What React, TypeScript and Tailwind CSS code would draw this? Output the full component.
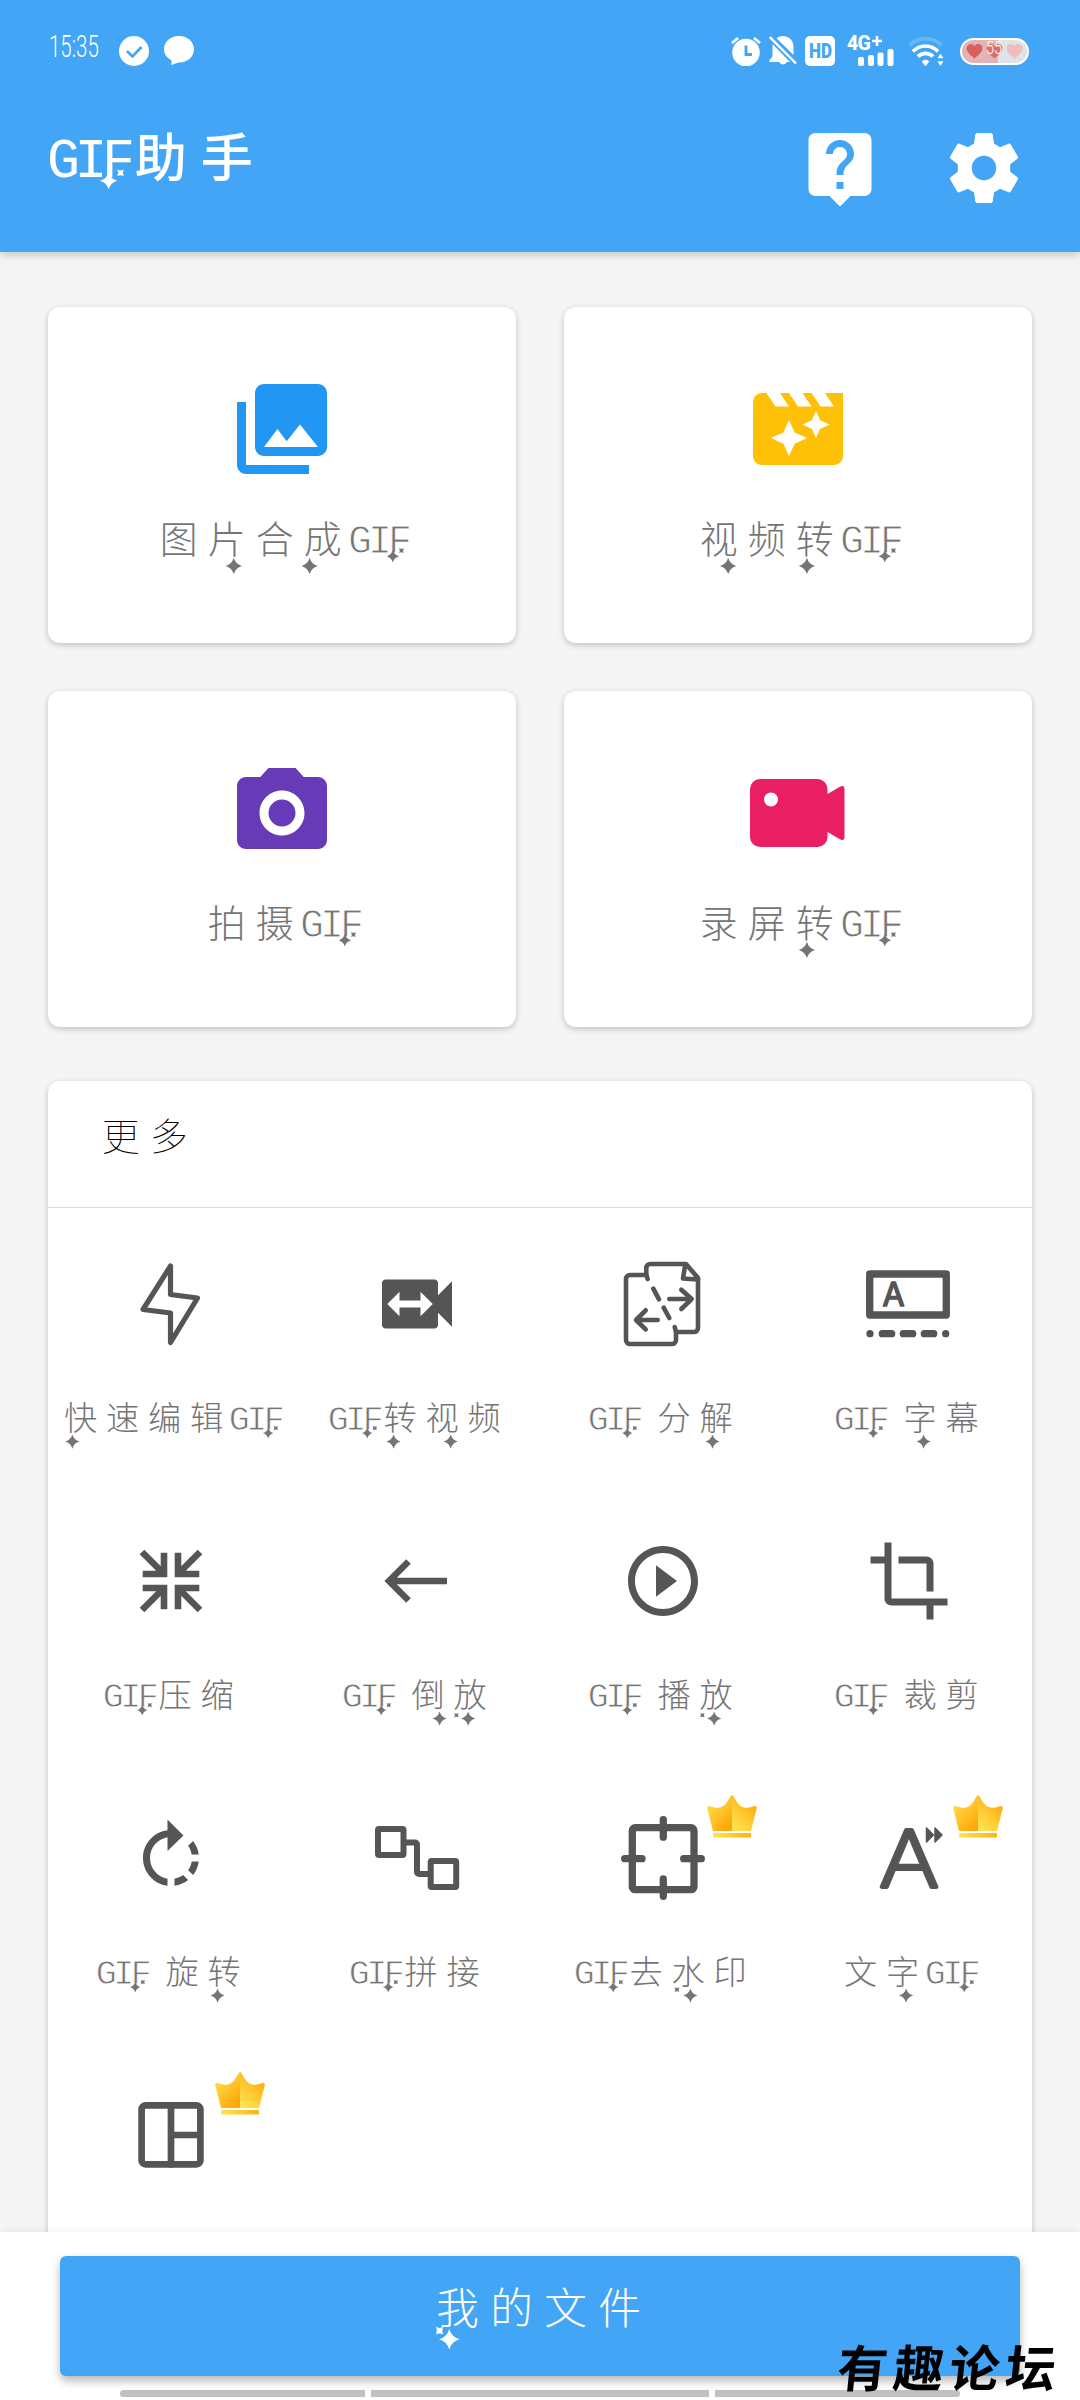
import type { ReactNode } from "react";
import clsx from "clsx";

type Star = { x: number; y: number; r: number; diag?: boolean };

// Pendant stars that hang from some of the characters. Units: one character cell.
const STARS: Record<string, Star[]> = {
  F: [
    { x: 0.1, y: 0.36, r: 0.13 },
    { x: 0.28, y: 0.24, r: 0.07, diag: true },
  ],
  片: [{ x: 0.62, y: 0.56, r: 0.17 }],
  成: [{ x: 0.2, y: 0.56, r: 0.17 }],
  视: [{ x: 0.67, y: 0.56, r: 0.17 }],
  转: [{ x: 0.31, y: 0.56, r: 0.17 }],
  快: [{ x: 0.27, y: 0.56, r: 0.17 }],
  解: [{ x: 0.38, y: 0.56, r: 0.17 }],
  字: [{ x: 0.55, y: 0.56, r: 0.17 }],
  倒: [{ x: 0.74, y: 0.56, r: 0.17 }],
  放: [
    { x: 0.42, y: 0.56, r: 0.17 },
    { x: 0.14, y: 0.48, r: 0.07, diag: true },
  ],
  水: [
    { x: 0.52, y: 0.56, r: 0.17 },
    { x: 0.2, y: 0.42, r: 0.08, diag: true },
  ],
  我: [
    { x: 0.32, y: 0.58, r: 0.19 },
    { x: 0.14, y: 0.42, r: 0.1, diag: true },
  ],
};

const LATIN = /[A-Z ]/;
const LATIN_W = 0.417;
const SPACE_W = 0.333;

function charWidth(c: string) {
  if (c === " ") return SPACE_W;
  return LATIN.test(c) ? LATIN_W : 1;
}

function Label({
  text,
  className,
  thin,
  weight = "font-thin",
}: {
  text: string;
  className?: string;
  thin?: string;
  weight?: string;
}) {
  const stars: Star[] = [];
  let x = 0;
  for (const c of text) {
    for (const s of STARS[c] ?? []) stars.push({ ...s, x: x + s.x });
    x += charWidth(c);
  }
  const runs = text.match(/[A-Z ]+|[^A-Z ]+/g) ?? [];
  return (
    <span className={clsx("relative inline-block whitespace-pre leading-[60px]", className)}>
      <span className="relative -top-[2px] flex h-[60px] items-baseline">
        {runs.map((run, i) =>
          LATIN.test(run) ? (
            <span
              key={i}
              className={clsx(
                "font-['Liberation_Mono',monospace] text-[0.833em] tracking-[-0.1em] [word-spacing:-0.1em]",
                thin,
              )}
            >
              {run}
            </span>
          ) : (
            <span
              key={i}
              className={clsx(
                "ml-[0.1em] -mr-[0.1em] font-['Noto_Sans_CJK_SC',sans-serif] text-[0.79em] tracking-[0.266em]",
                weight,
              )}
            >
              {run}
            </span>
          ),
        )}
      </span>
      <svg viewBox="0 0 1 1" className="absolute left-0 top-[30px] h-[1em] w-[1em] overflow-visible" fill="currentColor">
        {stars.map((s, i) => (
          <path
            key={i}
            d="M0-1Q.22-.22 1 0 .22.22 0 1-.22.22-1 0-.22-.22 0-1z"
            transform={`translate(${s.x} ${s.y}) scale(${s.r}) rotate(${s.diag ? 45 : 0})`}
          />
        ))}
      </svg>
    </span>
  );
}

function Glyph({ d, className }: { d: string; className?: string }) {
  return (
    <svg viewBox="0 0 24 24" fill="currentColor" className={clsx("block shrink-0", className)}>
      <path d={d} />
    </svg>
  );
}

function Line({ children }: { children: ReactNode }) {
  return (
    <svg
      viewBox="0 0 84 84"
      className="block size-[84px] overflow-visible"
      fill="none"
      stroke="currentColor"
      strokeLinecap="round"
      strokeLinejoin="round"
    >
      {children}
    </svg>
  );
}

const HELP =
  "M19 2H5c-1.11 0-2 .9-2 2v14c0 1.1.9 2 2 2h4l3 3 3-3h4c1.1 0 2-.9 2-2V4c0-1.1-.9-2-2-2zm-6 16h-2v-2h2v2zm2.07-7.75l-.9.92C13.45 11.9 13 12.5 13 14h-2v-.5c0-1.1.45-2.1 1.17-2.83l1.24-1.26c.37-.36.59-.86.59-1.41 0-1.1-.9-2-2-2s-2 .9-2 2H8c0-2.21 1.79-4 4-4s4 1.79 4 4c0 .88-.36 1.68-.93 2.25z";
const GEAR =
  "M19.43 12.98c.04-.32.07-.64.07-.98s-.03-.66-.07-.98l2.11-1.65c.19-.15.24-.42.12-.64l-2-3.46c-.12-.22-.39-.3-.61-.22l-2.49 1c-.52-.4-1.08-.73-1.69-.98l-.38-2.65C14.46 2.18 14.25 2 14 2h-4c-.25 0-.46.18-.49.42l-.38 2.65c-.61.25-1.17.59-1.69.98l-2.49-1c-.23-.09-.49 0-.61.22l-2 3.46c-.13.22-.07.49.12.64l2.11 1.65c-.04.32-.07.65-.07.98s.03.66.07.98l-2.11 1.65c-.19.15-.24.42-.12.64l2 3.46c.12.22.39.3.61.22l2.49-1c.52.4 1.08.73 1.69.98l.38 2.65c.03.24.24.42.49.42h4c.25 0 .46-.18.49-.42l.38-2.65c.61-.25 1.17-.59 1.69-.98l2.49 1c.23.09.49 0 .61-.22l2-3.46c.12-.22.07-.49-.12-.64l-2.11-1.65zM12 15.5c-1.93 0-3.5-1.57-3.5-3.5s1.57-3.5 3.5-3.5 3.5 1.57 3.5 3.5-1.57 3.5-3.5 3.5z";
const PHOTOS =
  "M22 16V4c0-1.1-.9-2-2-2H8c-1.1 0-2 .9-2 2v12c0 1.1.9 2 2 2h12c1.1 0 2-.9 2-2zm-11-4l2.03 2.71L16 11l4 5H8l3-4zM2 6v14c0 1.1.9 2 2 2h14v-2H4V6H2z";
const MOVIE =
  "M18 4l2 3h-3l-2-3h-2l2 3h-3l-2-3H8l2 3H7L5 4H4c-1.1 0-1.99.9-1.99 2L2 18c0 1.1.9 2 2 2h16c1.1 0 2-.9 2-2V4h-4zm-6.75 11.25L10 18l-1.25-2.75L6 14l2.75-1.25L10 10l1.25 2.75L14 14l-2.75 1.25zm5.69-3.31L16 14l-.94-2.06L13 11l2.06-.94L16 8l.94 2.06L19 11l-2.06.94z";
const CAMERA =
  "M9 2L7.17 4H4c-1.1 0-2 .9-2 2v12c0 1.1.9 2 2 2h16c1.1 0 2-.9 2-2V6c0-1.1-.9-2-2-2h-3.17L15 2H9zm3 15c-2.76 0-5-2.24-5-5s2.24-5 5-5 5 2.24 5 5-2.24 5-5 5zM12 9a3 3 0 1 0 0 6 3 3 0 0 0 0-6z";
const SWITCH_VIDEO =
  "M18 9.5V6c0-.55-.45-1-1-1H3c-.55 0-1 .45-1 1v12c0 .55.45 1 1 1h14c.55 0 1-.45 1-1v-3.5l4 4v-13l-4 4zm-5 6V13H7v2.5L3.5 12 7 8.5V11h6V8.5l3.5 3.5-3.5 3.5z";
const PLAY =
  "M10 16.5l6-4.5-6-4.5v9zM12 2C6.48 2 2 6.48 2 12s4.48 10 10 10 10-4.48 10-10S17.52 2 12 2zm0 18c-4.41 0-8-3.59-8-8s3.59-8 8-8 8 3.59 8 8-3.59 8-8 8z";
const CROP =
  "M17 15h2V7c0-1.1-.9-2-2-2H9v2h8v8zM7 17V1H5v4H1v2h4v10c0 1.1.9 2 2 2h10v4h2v-4h4v-2H7z";
const ROTATE =
  "M15.55 5.55L11 1v3.07C7.06 4.56 4 7.92 4 12s3.05 7.44 7 7.93v-2.02c-2.84-.48-5-2.94-5-5.91s2.16-5.43 5-5.91V10l4.55-4.45zM19.93 11c-.17-1.39-.72-2.73-1.62-3.89l-1.42 1.42c.54.75.88 1.6 1.02 2.47h2.02zM13 17.9v2.02c1.39-.17 2.74-.71 3.9-1.61l-1.44-1.44c-.75.54-1.59.89-2.46 1.03zm3.89-2.42l1.42 1.41c.9-1.16 1.45-2.5 1.62-3.89h-2.02c-.14.87-.48 1.72-1.02 2.48z";
const HEART = "M12 21C5 15 2 12 2 8a5.3 5.3 0 0 1 10-2.500A5.300 5.300 0 0 1 22 8c0 4-3 7-10 13z";

function Recorder() {
  return (
    <svg viewBox="0 0 108 108" className="block size-[108px]" fill="#e91e63">
      <path
        fillRule="evenodd"
        d="M16 20h57.500a10 10 0 0 1 10 10v5l12-7c3-2 5-1 5 2v48c0 3-2 4-5 2l-12-7v5a10 10 0 0 1-10 10H16A10 10 0 0 1 6 78V30a10 10 0 0 1 10-10zm11 13.500a7 7 0 1 0 0 14 7 7 0 0 0 0-14z"
      />
    </svg>
  );
}

function Crown() {
  return (
    <svg viewBox="0 0 50 43" className="absolute -top-[21px] left-[86px] block h-[43px] w-[50px]">
      <defs>
        <linearGradient id="crownLeft" x1="0" y1="0" x2="0.700" y2="1">
          <stop offset="0.150" stopColor="#ffe04a" />
          <stop offset="1" stopColor="#ffa70a" />
        </linearGradient>
        <linearGradient id="crownRight" x1="0.800" y1="0.100" x2="0.200" y2="1">
          <stop offset="0" stopColor="#ffa90c" />
          <stop offset="1" stopColor="#ffe450" />
        </linearGradient>
        <linearGradient id="crownBar">
          <stop offset="0" stopColor="#ffe450" />
          <stop offset="1" stopColor="#fbb414" />
        </linearGradient>
      </defs>
      <path d="M25 0C23 0 20 11 13 12.500 8 13.500 5 11.500 2.500 11 .8 10.700 0 11.500.2 13L6 36h19z" fill="url(#crownLeft)" />
      <path d="M25 0c2 0 5 11 12 12.500 5 1 8-1 10.500-1.500 1.700-.3 2.500.5 2.300 2L44 36H25z" fill="url(#crownRight)" />
      <rect x="6" y="38" width="38" height="4.500" rx="1" fill="url(#crownBar)" />
    </svg>
  );
}

const cards = [
  { text: "图片合成GIF", icon: <Glyph d={PHOTOS} className="size-[108px] text-[#2196f3]" /> },
  { text: "视频转GIF", icon: <Glyph d={MOVIE} className="size-[108px] text-[#ffc107]" /> },
  { text: "拍摄GIF", icon: <Glyph d={CAMERA} className="size-[108px] text-[#673ab7]" /> },
  { text: "录屏转GIF", icon: <Recorder /> },
];

const tools: { text?: string; vip?: boolean; icon: ReactNode }[] = [
  {
    text: "快速编辑GIF",
    icon: (
      <Line>
        <path d="M41.500 4v28.500L68.500 36l-27 44.500V51L14 47.500z" strokeWidth="5.200" />
      </Line>
    ),
  },
  { text: "GIF转视频", icon: <Glyph d={SWITCH_VIDEO} className="size-[84px]" /> },
  {
    text: "GIF 分解",
    icon: (
      <Line>
        <g strokeWidth="4.600">
          <path d="M26.700 17l-1.400-4H9a4 4 0 0 0-4 4v61a4 4 0 0 0 4 4h42a4 4 0 0 0 4-4v-8l-1.300-5" />
          <path d="M25.300 13V6a4 4 0 0 1 4-4H65l12 14v50a4 4 0 0 1-4 4H55" />
          <path d="M64 4l-2 12.500 15 1M32.300 26.700L38 37.300M42.700 45.700L48.300 56" />
          <path d="M48.300 37h22M60.300 27.700L70.700 37l-10.400 10M36.700 58H15.500M24.700 48.300L15 58l9.700 9.300" />
        </g>
      </Line>
    ),
  },
  {
    text: "GIF 字幕",
    icon: (
      <Line>
        <rect x="2.700" y="12" width="76.600" height="41" strokeWidth="7.300" />
        <path d="M3 71.700h0M15.300 71.700h9.400M36.300 71.700h9.400M57.300 71.700h9.400M78.700 71.700h0" strokeWidth="7.300" />
        <text
          x="26.500"
          y="44"
          textAnchor="middle"
          fill="currentColor"
          strokeWidth="1.500"
          className="font-['Inter',sans-serif] text-[32px] font-normal"
        >
          A
        </text>
      </Line>
    ),
  },
  {
    text: "GIF压缩",
    icon: (
      <Line>
        <g strokeWidth="6.600" strokeLinecap="butt" strokeLinejoin="miter">
          {[0, 90, 180, 270].map((a) => (
            <path key={a} d="M35 13.700V35H13.700M13 13l22 22" transform={`rotate(${a} 42 42)`} />
          ))}
        </g>
      </Line>
    ),
  },
  {
    text: "GIF 倒放",
    icon: (
      <Line>
        <path d="M33.500 22.500L14 42l19.500 19.500M14 42h58" strokeWidth="6.500" strokeLinecap="butt" strokeLinejoin="miter" />
      </Line>
    ),
  },
  { text: "GIF 播放", icon: <Glyph d={PLAY} className="size-[84px]" /> },
  { text: "GIF 裁剪", icon: <Glyph d={CROP} className="size-[84px]" /> },
  { text: "GIF 旋转", icon: <Glyph d={ROTATE} className="size-[84px]" /> },
  {
    text: "GIF拼接",
    icon: (
      <Line>
        <g strokeWidth="6">
          <rect x="3" y="13" width="25.500" height="26" rx="1" />
          <rect x="55.700" y="45" width="25.500" height="26" rx="1" />
          <path d="M31 26.500h9a2 2 0 0 1 2 2V56a2 2 0 0 0 2 2h9" />
        </g>
      </Line>
    ),
  },
  {
    text: "GIF去水印",
    vip: true,
    icon: (
      <Line>
        <g strokeWidth="7.300">
          <rect x="11.300" y="11.700" width="61.700" height="62" rx="3" />
          <path d="M42.300 3.700v17.500M42.300 63v17.300M3.700 42.700H21M62.700 42.700h17.600" />
        </g>
      </Line>
    ),
  },
  {
    text: "文字GIF",
    vip: true,
    icon: (
      <Line>
        <text
          x="0"
          y="70.500"
          textAnchor="middle"
          fill="currentColor"
          strokeWidth="4"
          transform="translate(42 0) scale(1.150 1)"
          className="font-['Inter',sans-serif] text-[79px] font-extralight"
        >
          A
        </text>
        <path d="M59.500 12v14l7-7zM68 12v14l7-7z" fill="currentColor" strokeWidth="1.500" />
      </Line>
    ),
  },
  {
    vip: true,
    icon: (
      <Line>
        <g strokeWidth="6.700">
          <rect x="12.600" y="12.400" width="58.800" height="59" rx="4" />
          <path d="M42 12.400v59M42 42h29" />
        </g>
      </Line>
    ),
  },
];

function StatusBar() {
  return (
    <div className="flex h-[102px] pl-[49px] pr-[51px] pt-[36px] text-white">
      <span className="-mt-[7px] w-[49px] whitespace-nowrap">
        <span className="inline-block origin-left scale-x-[0.640] font-['Roboto',sans-serif] text-[32px] font-light leading-[34px]">
          15:35
        </span>
      </span>
      <svg viewBox="0 0 30 30" className="ml-[21px] size-[30px]">
        <circle cx="15" cy="15" r="15" fill="#fff" />
        <path d="M8 15l5.500 5.500 9-9.500" fill="none" stroke="#42a5f5" strokeWidth="2.600" />
      </svg>
      <svg viewBox="0 0 30 30" className="ml-[15px] size-[30px]" fill="#fff">
        <path d="M15 0c8.500 0 15 5.500 15 13.200S23.500 26.500 15 26.500c-2.500.3-4.500 1.500-7.500 2.800v-5C2.500 21.500 0 17.800 0 13.200 0 5.500 6.500 0 15 0z" />
      </svg>
      <div className="ml-auto flex">
        <svg viewBox="0 0 30 30" className="size-[30px]" fill="#fff">
          <circle cx="15" cy="16.500" r="13.800" />
          <path d="M1 7l6-5M29 7l-6-5" stroke="#fff" strokeWidth="2.800" />
          <path d="M15 9.500v9h6" fill="none" stroke="#42a5f5" strokeWidth="2.800" />
        </svg>
        <svg viewBox="0 0 28 30" className="ml-[8px] h-[30px] w-[28px]" fill="#fff">
          <path d="M14 0c6 .3 10.500 4.500 10.500 10.500V19L7.500 2.200C9.500.7 12 0 14 0zM3.500 8L21 26h-3a4.500 4.500 0 0 1-8 0H.5v-2l3-3.500z" />
          <path d="M.8 1L27 27.500" stroke="#fff" strokeWidth="2.400" />
        </svg>
        <span className="ml-[8px] flex size-[30px] items-center justify-center rounded-[5px] bg-white font-['Roboto',sans-serif] text-[20px] font-black leading-none text-[#42a5f5]">
          <span className="scale-x-[0.850]">HD</span>
        </span>
        <div className="relative ml-[12px] h-[30px] w-[47px]">
          <span className="absolute -top-[2px] left-0 origin-left scale-x-[0.930] whitespace-nowrap font-['Roboto',sans-serif] text-[21px] font-extrabold leading-[18px] tracking-[-0.800px]">
            4G
          </span>
          <svg viewBox="0 0 10 10" className="absolute left-[25px] top-0 size-[10px]" stroke="#fff" strokeWidth="2.600">
            <path d="M5 0v10M0 5h10" />
          </svg>
          <svg viewBox="0 0 36 18" className="absolute bottom-0 right-0 h-[18px] w-[36px]" fill="#fff">
            <rect x="0" y="9" width="6" height="9" rx="2" />
            <rect x="10" y="7" width="6" height="11" rx="2" />
            <rect x="19.500" y="4.500" width="6" height="13.500" rx="2" />
            <rect x="29.500" y="1" width="6" height="17" rx="2" />
          </svg>
        </div>
        <svg viewBox="0 0 36 30" className="ml-[14px] h-[30px] w-[36px]" fill="none" stroke="#fff" strokeWidth="3.600">
          <path d="M1.500 9.500a22 22 0 0 1 32 0" opacity="0.200" />
          <path d="M5 15.500a17 17 0 0 1 25 0M10 20.500a10.500 10.500 0 0 1 15 0" />
          <path d="M14 25.500a5 5 0 0 1 7 0L17.500 30zM30 22l2.500-4 2.500 4zM30 25.500l2.500 4 2.500-4z" fill="#fff" strokeWidth="0.500" />
        </svg>
        <div className="relative ml-[16px] mt-[2px] flex h-[27px] w-[69px] items-center justify-around overflow-hidden rounded-full border-2 border-white bg-[linear-gradient(90deg,#e0b4b8_55%,#dfe2e6_55%)] px-[2px]">
          <Glyph d={HEART} className="size-[19px] text-[#d9605c]" />
          <Glyph d={HEART} className="size-[19px] text-[#d9706e]" />
          <Glyph d={HEART} className="size-[19px] text-[#eebdbb]" />
          <span className="absolute -top-[1px] left-[22px] scale-x-[0.800] font-['Roboto',sans-serif] text-[18px] font-light leading-[18px]">
            55
          </span>
        </div>
      </div>
    </div>
  );
}

export default function App() {
  return (
    <div className="flex h-[2400px] w-[1080px] flex-col overflow-hidden bg-[#f5f5f5]">
      <header className="z-10 h-[252px] shrink-0 bg-[#42a5f5] shadow-[0_3px_8px_rgba(0,0,0,0.200)]">
        <StatusBar />
        <div className="flex items-start pl-[47px] pr-[54px] text-white">
          <Label text="GIF助手" className="mt-[25px] text-[66px]" weight="font-medium" />
          <Glyph d={HELP} className="ml-auto mt-[24px] size-[84px]" />
          <Glyph d={GEAR} className="ml-[60px] mt-[24px] size-[84px]" />
        </div>
      </header>

      <main className="min-h-0 flex-1 overflow-hidden px-[48px] pt-[55px]">
        <div className="grid grid-cols-2 gap-[48px]">
          {cards.map((card) => (
            <div
              key={card.text}
              className="flex h-[336px] flex-col items-center rounded-[12px] bg-white pt-[68px] shadow-[0_2px_6px_rgba(0,0,0,0.220)]"
            >
              {card.icon}
              <Label
                text={card.text}
                className="mt-[26px] text-[48px] text-[#757575]"
                thin="[-webkit-text-stroke:1px_white]"
                weight="font-light"
              />
            </div>
          ))}
        </div>

        <section className="mt-[54px] h-[1300px] rounded-[12px] bg-white shadow-[0_2px_6px_rgba(0,0,0,0.220)]">
          <div className="h-[127px] border-b border-[#dcdcdc] pl-[50px] pt-[25px]">
            <Label text="更多" className="text-[48px] text-black" />
          </div>
          <div className="grid grid-cols-4 text-[#555]">
            {tools.map((tool, i) => (
              <div key={i} className="flex h-[277px] flex-col items-center pt-[54px]">
                <div className="relative size-[84px]">
                  {tool.icon}
                  {tool.vip && <Crown />}
                </div>
                {tool.text && (
                  <Label
                    text={tool.text}
                    className="mt-[42px] text-[42px] text-[#757575]"
                    thin="[-webkit-text-stroke:0.800px_white]"
                    weight="font-light"
                  />
                )}
              </div>
            ))}
          </div>
        </section>
      </main>

      <footer className="relative z-10 flex h-[168px] shrink-0 flex-col bg-white px-[60px] pt-[24px] shadow-[0_-2px_6px_rgba(0,0,0,0.060)]">
        <button
          type="button"
          className="flex h-[120px] shrink-0 items-start justify-center rounded-[6px] bg-[#42a5f5] pt-[22px] text-white shadow-[0_5px_10px_rgba(0,0,0,0.280)]"
        >
          <Label text="我的文件" className="text-[54px]" weight="font-light" />
        </button>
        <div className="mt-[14px] flex h-[7px] gap-[6px] px-[60px]">
          <span className="w-[245px] rounded-l-full bg-[#c0c0c0]" />
          <span className="w-[338px] bg-[#c0c0c0]" />
          <span className="w-[245px] rounded-r-full bg-[#c0c0c0]" />
        </div>
        <span className="absolute left-[838px] top-[103px] -skew-x-6 whitespace-nowrap font-['Noto_Sans_CJK_SC',sans-serif] text-[50px] font-bold leading-[60px] tracking-[6px] text-black">
          有趣论坛
        </span>
      </footer>
    </div>
  );
}
